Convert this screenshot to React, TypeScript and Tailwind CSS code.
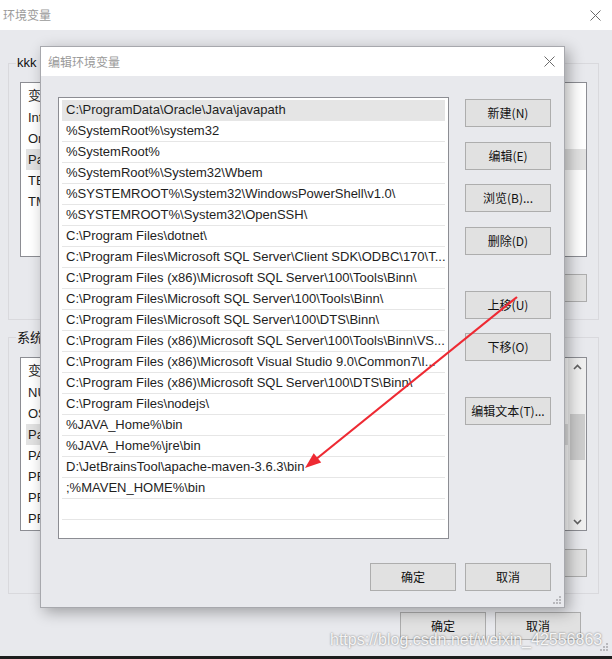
import React from 'react';

const UI_FONT = '"Liberation Sans", "Noto Sans CJK SC", sans-serif';
const CJK_FONT = '"Noto Sans CJK SC", "Liberation Sans", sans-serif';

const pathEntries = [
  'C:\\ProgramData\\Oracle\\Java\\javapath',
  '%SystemRoot%\\system32',
  '%SystemRoot%',
  '%SystemRoot%\\System32\\Wbem',
  '%SYSTEMROOT%\\System32\\WindowsPowerShell\\v1.0\\',
  '%SYSTEMROOT%\\System32\\OpenSSH\\',
  'C:\\Program Files\\dotnet\\',
  'C:\\Program Files\\Microsoft SQL Server\\Client SDK\\ODBC\\170\\T...',
  'C:\\Program Files (x86)\\Microsoft SQL Server\\100\\Tools\\Binn\\',
  'C:\\Program Files\\Microsoft SQL Server\\100\\Tools\\Binn\\',
  'C:\\Program Files\\Microsoft SQL Server\\100\\DTS\\Binn\\',
  'C:\\Program Files (x86)\\Microsoft SQL Server\\100\\Tools\\Binn\\VS...',
  'C:\\Program Files (x86)\\Microsoft Visual Studio 9.0\\Common7\\I...',
  'C:\\Program Files (x86)\\Microsoft SQL Server\\100\\DTS\\Binn\\',
  'C:\\Program Files\\nodejs\\',
  '%JAVA_Home%\\bin',
  '%JAVA_Home%\\jre\\bin',
  'D:\\JetBrainsTool\\apache-maven-3.6.3\\bin',
  ';%MAVEN_HOME%\\bin',
  '',
];

const userVars = ['IntelliJ IDEA', 'OneDrive', 'Path', 'TEMP', 'TMP'];
const systemVars = [
  'NUMBER_OF_PROCESSORS',
  'OS',
  'Path',
  'PATHEXT',
  'PROCESSOR_ARCHITECTURE',
  'PROCESSOR_IDENTIFIER',
  'PROCESSOR_LEVEL',
];

function CloseIcon() {
  return (
    <svg width="11" height="11" viewBox="0 0 11 11">
      <path d="M0.5 0.5L10.5 10.5M10.5 0.5L0.5 10.5" stroke="#6b6b6b" strokeWidth="1" fill="none" />
    </svg>
  );
}

function Grip() {
  const dots = [
    [6, 0],
    [3, 3],
    [6, 3],
    [0, 6],
    [3, 6],
    [6, 6],
  ];
  return (
    <svg width="8" height="8" viewBox="0 0 8 8">
      {dots.map(([x, y], i) => (
        <rect key={i} x={x} y={y} width="2" height="2" fill="#b8b8bc" />
      ))}
    </svg>
  );
}

function Btn({ label, className = '' }: { label: string; className?: string }) {
  return (
    <div
      className={`w-[86px] h-[28px] flex items-center justify-center bg-[#e1e1e1] border border-[#adadad] text-[12px] text-[#111] ${className}`}
      style={{ fontFamily: CJK_FONT }}
    >
      {label}
    </div>
  );
}

function Chevron({ down }: { down?: boolean }) {
  return (
    <svg width="9" height="6" viewBox="0 0 9 6">
      <path d={down ? 'M1 1L4.5 4.5L8 1' : 'M1 5L4.5 1.5L8 5'} stroke="#606060" strokeWidth="1.6" fill="none" />
    </svg>
  );
}

function VarList({
  names,
  height,
  scroll,
}: {
  names: string[];
  height: string;
  scroll?: boolean;
}) {
  return (
    <div className={`flex bg-white border border-[#8c8d93] ${height}`}>
      <div className="flex-1 min-w-0 overflow-hidden text-[13px] text-[#1e1e1e]">
        <div className="h-[24px] flex items-center pl-[7px]" style={{ fontFamily: CJK_FONT }}>
          变量
        </div>
        {names.map((n) => (
          <div
            key={n}
            className={`h-[21px] flex items-center ml-[5px] pl-[2px] whitespace-nowrap ${
              n === 'Path' ? 'bg-[#e2e2e2]' : ''
            }`}
          >
            {n}
          </div>
        ))}
      </div>
      {scroll && (
        <div className="w-[18px] bg-[#f0f0f0] flex flex-col items-center">
          <div className="h-[17px] flex items-center justify-center">
            <Chevron />
          </div>
          <div className="flex-1 w-full flex flex-col items-center">
            <div className="mt-[39px] w-[15px] h-[46px] bg-[#cdcdcd]" />
          </div>
          <div className="h-[17px] flex items-center justify-center">
            <Chevron down />
          </div>
        </div>
      )}
    </div>
  );
}

function EditDialog() {
  return (
    <div className="absolute left-[40px] top-[46px] w-[525px] bg-[#e8e9ed] border border-[#a7a8ad] shadow-[4px_4px_14px_rgba(0,0,0,0.32)] flex flex-col">
      <div className="h-[29px] bg-white flex items-center justify-between pl-[7px] pr-[9px]">
        <span className="text-[12px] text-[#9a9a9a]" style={{ fontFamily: CJK_FONT }}>
          编辑环境变量
        </span>
        <CloseIcon />
      </div>

      <div className="flex pt-[21px] pl-[17px] pr-[13px]">
        <div className="w-[391px] h-[442px] bg-white border border-[#8c8d93] pt-[2px] px-[3px] overflow-hidden">
          {pathEntries.map((p, i) => (
            <div
              key={i}
              className={`h-[21px] border-b border-[#e6e6e6] flex items-center pl-[4px] whitespace-nowrap overflow-hidden text-[13px] text-[#1e1e1e] ${
                i === 0 ? 'bg-[#e5e5e5]' : ''
              }`}
            >
              {p}
            </div>
          ))}
        </div>

        <div className="ml-[16px] pt-[2px] flex flex-col">
          <Btn label="新建(N)" />
          <Btn label="编辑(E)" className="mt-[15px]" />
          <Btn label="浏览(B)..." className="mt-[14px]" />
          <Btn label="删除(D)" className="mt-[15px]" />
          <Btn label="上移(U)" className="mt-[36px]" />
          <Btn label="下移(O)" className="mt-[14px]" />
          <Btn label="编辑文本(T)..." className="mt-[36px]" />
        </div>
      </div>

      <div className="flex justify-end gap-[9px] pr-[13px] mt-[24px] pb-[16px]">
        <Btn label="确定" />
        <Btn label="取消" />
      </div>

      <div className="absolute right-[3px] bottom-[3px]">
        <Grip />
      </div>
    </div>
  );
}

export default function App() {
  return (
    <div className="relative w-[612px] h-[659px] overflow-hidden bg-[#1d1d1d]" style={{ fontFamily: UI_FONT }}>
      <div className="relative h-[656px] bg-[#e8e9ed] flex flex-col">
        <div className="h-[30px] bg-white flex items-center justify-between pl-[3px] pr-[11px]">
          <span className="text-[12px] text-[#9a9a9a]" style={{ fontFamily: CJK_FONT }}>
            环境变量
          </span>
          <CloseIcon />
        </div>

        <div className="pt-[25px] pl-[8px] w-[599px]">
          <fieldset className="border border-[#d9d9dd] px-[11px] pt-[11px] pb-[17px]">
            <legend className="-ml-[4px] px-[1px] text-[13px] leading-[16px] text-[#111]">
              kkk 的用户变量(U)
            </legend>
            <VarList names={userVars} height="h-[175px]" />
            <div className="flex justify-end gap-[9px] mt-[17px]">
              <Btn label="新建(N)..." />
              <Btn label="编辑(E)..." />
              <Btn label="删除(D)" />
            </div>
          </fieldset>

          <fieldset className="mt-[9px] border border-[#d9d9dd] px-[11px] pt-[12px] pb-[16px]">
            <legend className="-ml-[4px] px-[1px] text-[13px] leading-[16px] text-[#111]" style={{ fontFamily: CJK_FONT }}>
              系统变量(S)
            </legend>
            <VarList names={systemVars} height="h-[174px]" scroll />
            <div className="flex justify-end gap-[9px] mt-[18px]">
              <Btn label="新建(W)..." />
              <Btn label="编辑(I)..." />
              <Btn label="删除(L)" />
            </div>
          </fieldset>
        </div>

        <div className="flex justify-end gap-[9px] pr-[31px] mt-[18px]">
          <Btn label="确定" />
          <Btn label="取消" />
        </div>

        <div className="absolute right-[4px] bottom-[5px]">
          <Grip />
        </div>

        <EditDialog />
      </div>

      {/* red annotation arrow */}
      <svg className="absolute inset-0 pointer-events-none" width="612" height="659" viewBox="0 0 612 659">
        <line x1="517" y1="297" x2="315" y2="460" stroke="#ee2a33" strokeWidth="2.2" />
        <polygon points="305,468 313.7,453.3 321.2,462.6" fill="#ee2a33" />
      </svg>

      <div
        className="absolute left-[330px] top-[629px] text-[16px] leading-[21px] text-white/90 whitespace-nowrap pointer-events-none [text-shadow:0_0_2px_rgba(0,0,0,0.55)]"
        style={{ fontFamily: '"Liberation Sans", Arial, sans-serif' }}
      >
        https://blog.csdn.net/weixin_42556863
      </div>
    </div>
  );
}
